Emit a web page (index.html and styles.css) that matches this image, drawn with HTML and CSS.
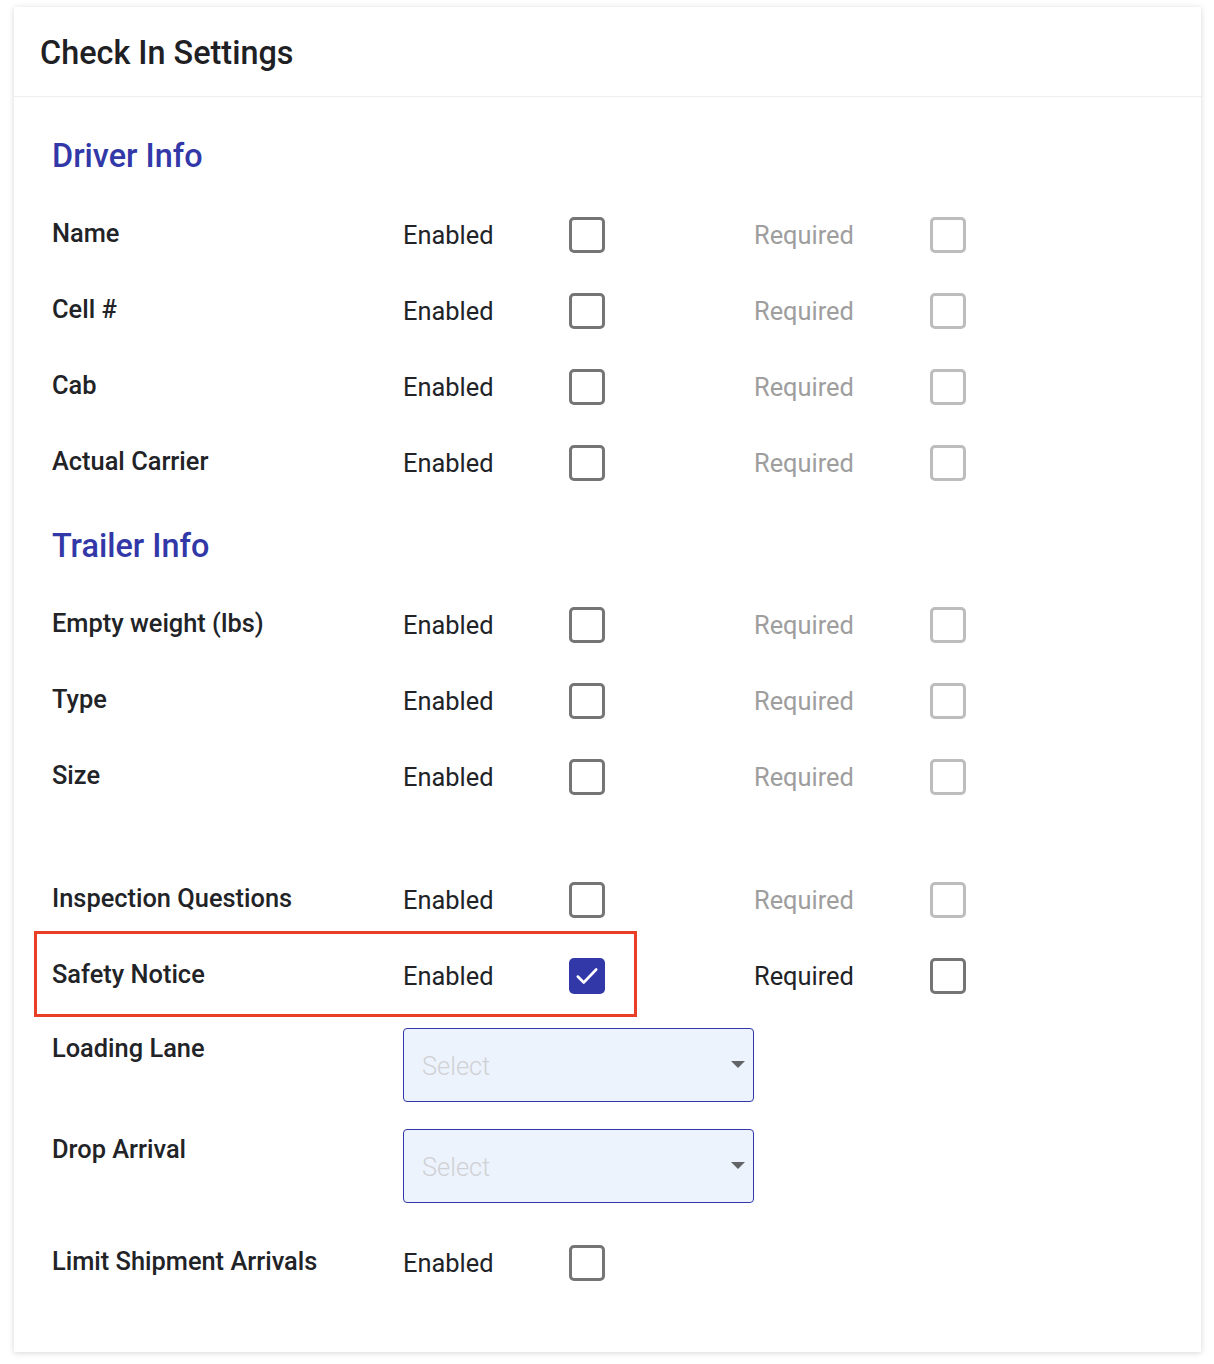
FILE: index.html
```html
<!DOCTYPE html>
<html lang="en">
<head>
    <meta charset="UTF-8">
    <meta name="viewport" content="width=device-width, initial-scale=1.0">
    <title>Check In Settings</title>
    <link rel="stylesheet" href="styles.css">
</head>
<body>
    <div class="card">
        <div class="card-header">
            <h1 class="card-title">Check In Settings</h1>
        </div>

        <div class="card-body">
            <h2 class="section-title">Driver Info</h2>

            <div class="setting-row">
                <div class="setting-label">Name</div>
                <div class="opt-label">Enabled</div>
                <div><span class="box"></span></div>
                <div class="opt-label disabled">Required</div>
                <div><span class="box disabled"></span></div>
            </div>
            <div class="setting-row">
                <div class="setting-label">Cell #</div>
                <div class="opt-label">Enabled</div>
                <div><span class="box"></span></div>
                <div class="opt-label disabled">Required</div>
                <div><span class="box disabled"></span></div>
            </div>
            <div class="setting-row">
                <div class="setting-label">Cab</div>
                <div class="opt-label">Enabled</div>
                <div><span class="box"></span></div>
                <div class="opt-label disabled">Required</div>
                <div><span class="box disabled"></span></div>
            </div>
            <div class="setting-row">
                <div class="setting-label">Actual Carrier</div>
                <div class="opt-label">Enabled</div>
                <div><span class="box"></span></div>
                <div class="opt-label disabled">Required</div>
                <div><span class="box disabled"></span></div>
            </div>

            <h2 class="section-title">Trailer Info</h2>

            <div class="setting-row">
                <div class="setting-label">Empty weight (lbs)</div>
                <div class="opt-label">Enabled</div>
                <div><span class="box"></span></div>
                <div class="opt-label disabled">Required</div>
                <div><span class="box disabled"></span></div>
            </div>
            <div class="setting-row">
                <div class="setting-label">Type</div>
                <div class="opt-label">Enabled</div>
                <div><span class="box"></span></div>
                <div class="opt-label disabled">Required</div>
                <div><span class="box disabled"></span></div>
            </div>
            <div class="setting-row">
                <div class="setting-label">Size</div>
                <div class="opt-label">Enabled</div>
                <div><span class="box"></span></div>
                <div class="opt-label disabled">Required</div>
                <div><span class="box disabled"></span></div>
            </div>

            <div class="spacer"></div>

            <div class="setting-row">
                <div class="setting-label">Inspection Questions</div>
                <div class="opt-label">Enabled</div>
                <div><span class="box"></span></div>
                <div class="opt-label disabled">Required</div>
                <div><span class="box disabled"></span></div>
            </div>
            <div class="setting-row highlighted">
                <div class="setting-label">Safety Notice</div>
                <div class="opt-label">Enabled</div>
                <div>
                    <span class="box checked">
                        <svg width="26" height="26" viewBox="0 0 24 24" fill="none" stroke="#fff" stroke-width="2.4" stroke-linecap="round" stroke-linejoin="round">
                            <path d="M3.5 12.5l5.5 5.5 11.5-12"></path>
                        </svg>
                    </span>
                </div>
                <div class="opt-label">Required</div>
                <div><span class="box"></span></div>
                <div class="highlight-frame"></div>
            </div>

            <div class="select-row">
                <div class="setting-label">Loading Lane</div>
                <div class="select-box">
                    <span class="placeholder">Select</span>
                    <span class="caret"></span>
                </div>
            </div>
            <div class="select-row">
                <div class="setting-label">Drop Arrival</div>
                <div class="select-box">
                    <span class="placeholder">Select</span>
                    <span class="caret"></span>
                </div>
            </div>

            <div class="setting-row last">
                <div class="setting-label">Limit Shipment Arrivals</div>
                <div class="opt-label">Enabled</div>
                <div><span class="box"></span></div>
            </div>
        </div>
    </div>
</body>
</html>
```

FILE: styles.css
```css
/* check in settings card */
body {
    margin: 0;
    padding: 7px 13px 10px 14px;
    font-family: Roboto, 'Liberation Sans', sans-serif;
    background: #fff;
    color: #212327;
}

.card {
    background: #fff;
    box-shadow: 0 1px 6px rgba(0, 0, 0, 0.16);
}

.card-header {
    height: 90px;
    padding: 0 26px;
    display: flex;
    align-items: center;
    border-bottom: 1px solid #eceef2;
    box-sizing: border-box;
}

.card-title {
    margin: 0;
    font-size: 32.4px;
    font-weight: 500;
    color: #1e2024;
    padding-top: 2px;
}

.card-body {
    padding: 14px 38px 51px;
}

.section-title {
    margin: 26px 0 22px;
    font-size: 32.4px;
    font-weight: 500;
    line-height: 38px;
    color: #3238a8;
}

.setting-row {
    position: relative;
    display: grid;
    grid-template-columns: 351px 166px 185px 176px 36px;
    align-items: center;
    height: 76px;
}

.setting-label {
    font-size: 25.4px;
    font-weight: 500;
    color: #212327;
    margin-top: -4px;
}

.opt-label {
    font-size: 25.4px;
    color: #212327;
}

.opt-label.disabled {
    color: #9e9e9e;
}

.box {
    display: flex;
    align-items: center;
    justify-content: center;
    width: 36px;
    height: 36px;
    box-sizing: border-box;
    border: 3px solid #757575;
    border-radius: 5px;
}

.box.disabled {
    border-color: #bdbdbd;
}

.box.checked {
    border: none;
    background: #3238a8;
}

.spacer {
    height: 47px;
}

.highlight-frame {
    position: absolute;
    top: -7px;
    left: -18px;
    width: 603px;
    height: 86px;
    box-sizing: border-box;
    border: 3px solid #ea3f27;
    pointer-events: none;
}

.select-row {
    display: grid;
    grid-template-columns: 351px 351px;
    align-items: start;
    margin-top: 14px;
}

.select-row + .select-row {
    margin-top: 27px;
}

.select-row .setting-label {
    margin-top: 5px;
}

.select-box {
    position: relative;
    height: 74px;
    box-sizing: border-box;
    border: 1px solid #3238a8;
    border-radius: 4px;
    background: #edf3fd;
    display: flex;
    align-items: center;
    padding: 0 18px;
}

.placeholder {
    font-size: 25.4px;
    font-weight: 300;
    color: #cfd1d4;
    margin-top: 2px;
}

.caret {
    position: absolute;
    right: 8px;
    top: 32px;
    width: 0;
    height: 0;
    border-left: 7px solid transparent;
    border-right: 7px solid transparent;
    border-top: 7px solid #636468;
}

.setting-row.last {
    margin-top: 22px;
}
```
